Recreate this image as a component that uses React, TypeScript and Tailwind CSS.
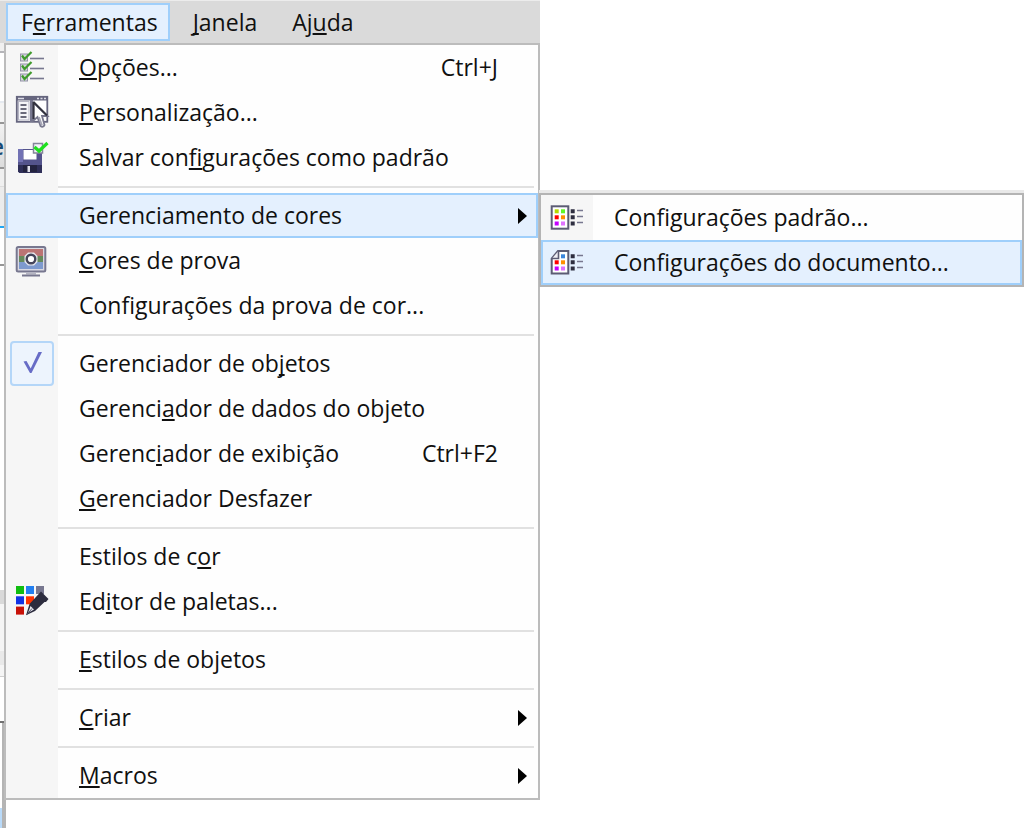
import React from "react";
import clsx from "clsx";

type ItemProps = {
  before?: string
  accessKey?: string
  after?: string
  shortcut?: string
  icon?: React.ReactNode
  submenu?: boolean
  active?: boolean
}

const Label = (props: ItemProps) => (
  <span className="whitespace-nowrap">
    {props.before}
    {props.accessKey && <u className="decoration-2 underline-offset-2 [text-decoration-skip-ink:none]">{props.accessKey}</u>}
    {props.after}
  </span>
)

const MenuItem = (props: ItemProps) => (
  <li>
    <button
      type="button"
      aria-haspopup={props.submenu ? "menu" : undefined}
      className={clsx("flex w-full h-[45px] items-center text-left", props.active && "bg-[#e4f0fe] inset-ring-2 inset-ring-[#9fcffb]")}
    >
      <span className={clsx("w-[52px] h-[45px] shrink-0", !props.active && "bg-[#f6f6f6]")}>{props.icon}</span>
      <span className="flex-1 pl-[21px] pb-0.5"><Label {...props} /></span>
      {props.shortcut && <span className="pr-10 pb-0.5">{props.shortcut}</span>}
      {props.submenu && (
        <svg className="w-[9px] h-4 mr-[11px]" viewBox="0 0 9 16" aria-hidden="true">
          <path d="M0 0 L9 8 L0 16 Z" fill="#000" />
        </svg>
      )}
    </button>
  </li>
)

const Separator = () => (
  <li role="separator" className="flex h-[13px] items-center">
    <span className="w-[52px] h-full shrink-0 bg-[#f6f6f6]" />
    <span className="flex-1 h-0.5 mr-1 bg-[#e1e1e1]" />
  </li>
)

const Icon = (props: { children: React.ReactNode }) => (
  <svg className="block w-[52px] h-[45px]" viewBox="0 0 52 45" fill="none" aria-hidden="true">{props.children}</svg>
)

const OptionsIcon = () => (
  <Icon>
    {[0, 10, 20].map((y) => (
      <g key={y} transform={`translate(0 ${y})`}>
        <rect x="14.5" y="9" width="7" height="7" fill="#d5d5de" stroke="#9494a8" />
        <path d="M24 13.5 H38" stroke="#77778f" strokeWidth="1.6" />
        <path d="M16 10.5 L18.5 14 L25.5 7" stroke="#3f9a2c" strokeWidth="2.2" />
      </g>
    ))}
  </Icon>
)

const CustomizeIcon = () => (
  <Icon>
    <rect x="10.8" y="6.8" width="30.5" height="25" fill="#fff" stroke="#66667f" strokeWidth="1.8" />
    <path d="M10 8.5 H42" stroke="#66667f" strokeWidth="4" />
    <path d="M12 8.5 H18 M31 8.5 H33 M34.5 8.5 H36.5 M38 8.5 H40" stroke="#dcdce6" strokeWidth="1.4" />
    <rect x="12.5" y="11.5" width="10.5" height="18.5" fill="#f4f4f8" stroke="#b5b5c4" />
    <path d="M14.5 15 H20.5 M14.5 19 H20.5 M14.5 23 H20.5 M14.5 27 H20.5" stroke="#3b3b52" strokeWidth="1.6" />
    <path d="M25.5 10 V32" stroke="#77778f" strokeWidth="3" />
    <path d="M27.5 12.5 V30.5 L31.5 27 L34.5 36 Q37 38 38.5 35 L36 26 H41.5 Z" fill="#fff" stroke="#77778d" strokeWidth="1.8" />
    <path d="M27.5 12 V29 M27.5 12 L41 25.5" stroke="#33333f" strokeWidth="2" />
    <path d="M33 27 L36 35.5" stroke="#a5a5b5" strokeWidth="1.8" />
  </Icon>
)

const SaveIcon = () => (
  <Icon>
    <path d="M12 14 H36 V38 H13.5 L12 36.5 Z" fill="#54548c" />
    <path d="M12 14 H17 V27 H12 Z" fill="#7272b4" />
    <path d="M12 30 H36 V38 H13.5 L12 36.5 Z" fill="#2f2f58" />
    <rect x="17.5" y="15" width="13" height="9.5" fill="#fff" />
    <rect x="17" y="30" width="14" height="7" fill="#23233f" />
    <rect x="21.5" y="31" width="2.5" height="6" fill="#e2e2ec" />
    <rect x="27.5" y="8.5" width="9" height="9.5" fill="#f2f2f8" stroke="#85859a" strokeWidth="1.5" />
    <path d="M28.5 12 L33 16 L41.5 8" stroke="#1fe01f" strokeWidth="3.2" />
  </Icon>
)

const ProofIcon = () => (
  <Icon>
    <rect x="10.7" y="9" width="28.6" height="24.5" rx="1.5" fill="#d9d9e2" stroke="#77778f" strokeWidth="2" />
    <rect x="13" y="11" width="24" height="7" fill="#bb7474" />
    <rect x="13" y="18" width="24" height="6" fill="#668a5c" />
    <rect x="13" y="24" width="24" height="7" fill="#7e9ace" />
    <path d="M22 14.5 H28 L31.5 18 V24 L28 27.5 H22 L18.5 24 V18 Z" fill="#e8e8ee" />
    <circle cx="25" cy="21" r="4.3" fill="#fff" stroke="#45455a" strokeWidth="2.4" />
    <path d="M20 35.5 H30" stroke="#b5b5c2" strokeWidth="2" />
    <path d="M16 37.5 H34" stroke="#77778f" strokeWidth="2" />
  </Icon>
)

const CheckedIcon = () => (
  <Icon>
    <rect x="5" y="1" width="42" height="43" rx="3" fill="#edf4fd" stroke="#b4d6f8" strokeWidth="2" />
    <path d="M17.5 20.5 L20.5 20 L24.7 27.5 L32.5 11 H36 L25.5 32 H24 Z" fill="#676cc6" />
  </Icon>
)

const PaletteIcon = () => (
  <Icon>
    <rect x="10" y="7" width="8" height="8" fill="#10bd10" />
    <rect x="20" y="7" width="8" height="8" fill="#227ff0" />
    <rect x="30" y="7" width="8" height="8" fill="#77778f" />
    <rect x="10" y="17.3" width="8" height="8" fill="#1133e6" />
    <rect x="20" y="17.3" width="8" height="8" fill="#ff3300" />
    <rect x="10" y="27.6" width="8" height="8" fill="#c81108" />
    <path d="M23.5 25 L35 12.5 L42.5 20 L40 23 L38.5 23 L29 32 L20 36.2 Z" fill="#2c2c3e" />
    <path d="M24.5 27 L28 30.5 L22 34 Z" fill="#e6e6ee" />
    <path d="M20.5 36 L26 29.5" stroke="#55556a" />
  </Icon>
)

const DocumentColorsIcon = (props: { folded?: boolean }) => (
  <Icon>
    {props.folded ? (
      <path d="M17 11 H27.3 V33.5 H10.7 V18.5 Z" fill="#fff" stroke="#5c5c74" strokeWidth="2" />
    ) : (
      <rect x="10.7" y="11.3" width="16.6" height="22.4" fill="#fff" stroke="#5c5c74" strokeWidth="2" />
    )}
    {!props.folded && <rect x="13.7" y="14.3" width="4" height="4" fill="#b6d800" />}
    <rect x="20" y="14.3" width="4" height="4" fill={props.folded ? "#3b86dc" : "#60f825"} />
    <rect x="13.7" y="20.3" width="4" height="4" fill="#ff0000" />
    <rect x="20" y="20.3" width="4" height="4" fill="#ff9000" />
    <rect x="13.7" y="26.5" width="4" height="4" fill="#c400ff" />
    <rect x="20" y="26.5" width="4" height="4" fill="#df72ff" />
    {props.folded && <path d="M11 18.5 H17.5 V11" fill="#eeeef4" stroke="#5c5c74" strokeWidth="1.6" />}
    <path d="M29.7 16.3 H33.7 M29.7 22.3 H33.7 M29.7 28.5 H33.7" stroke="#2e2e40" strokeWidth="4" />
    <path d="M36 15.5 H42 M36 21.5 H42 M36 27.5 H42" stroke="#77778f" strokeWidth="1.6" />
  </Icon>
)

// sliver of the window that shows left of the menu
const WindowEdge = () => (
  <div className="flex flex-col w-1 shrink-0 overflow-hidden bg-white" aria-hidden="true">
    <div className="h-[10px] shrink-0 bg-[#f0f0f0] border-b-2 border-[#b5b5b9]" />
    <div className="h-[50px] shrink-0 border-b-2 border-[#e6eaf0]" />
    <div className="h-[21px] shrink-0 bg-[#f4f4f4] border-b-2 border-[#969696]" />
    <div className="flex h-[45px] shrink-0 justify-end items-center bg-linear-to-b from-[#f2f2f2] to-[#dcdcdc] border-b-2 border-[#969696] font-semibold text-[#174a74]">e</div>
    <div className="h-[18px] shrink-0 bg-[#f0f0f0] border-b border-[#dddddd]" />
    <div className="h-[41px] shrink-0 bg-[#ececec] border-b-2 border-[#22a7f2]" />
    <div className="h-[38px] shrink-0 border-b-2 border-[#969696]" />
    <div className="h-[324px] shrink-0" />
    <div className="h-[14px] shrink-0 bg-[#d9d9d9]" />
    <div className="h-[47px] shrink-0 bg-[#f5f5f5]" />
    <div className="h-[14px] shrink-0 bg-[#e9e9e9]" />
    <div className="h-[12px] shrink-0 bg-[#f5f5f5] border-b border-[#d0d0d0]" />
    <div className="h-[46px] shrink-0 border-b-2 border-[#707070]" />
    <div className="h-[85px] shrink-0 ml-0.5 bg-[#b4b4b4]" />
    <div className="flex-1 border-r-2 border-[#b4b4b4] bg-[#b9daf9]" />
  </div>
)

const tabClass = "h-[38px] pl-[13px] pr-2.5 border-2 flex items-center"

export default function App() {
  return (
    <div className="grid grid-cols-[540fr_484fr] min-h-screen items-stretch bg-white font-['Open_Sans','Noto_Sans',sans-serif] text-[23px] leading-[30px] text-[#101010]">
      <div className="flex flex-col">
        <nav className="flex h-[43px] shrink-0 gap-2 pl-1.5 pt-0.5 bg-[#dadada] border-t border-[#ececec]">
          <button type="button" aria-expanded="true" className={clsx(tabClass, "border-[#9fcffb] bg-[#e4f0fe]")}>
            <Label before="F" accessKey="e" after="rramentas" />
          </button>
          <button type="button" className={clsx(tabClass, "border-transparent")}>
            <Label accessKey="J" after="anela" />
          </button>
          <button type="button" className={clsx(tabClass, "border-transparent")}>
            <Label before="Aj" accessKey="u" after="da" />
          </button>
        </nav>
        <div className="flex flex-1">
          <WindowEdge />
          <div className="flex flex-1 flex-col">
            <ul className="border-2 border-[#bcbcbc] bg-[#fefefe]">
              <MenuItem accessKey="O" after="pções..." shortcut="Ctrl+J" icon={<OptionsIcon />} />
              <MenuItem accessKey="P" after="ersonalização..." icon={<CustomizeIcon />} />
              <MenuItem before="Salvar con" accessKey="f" after="igurações como padrão" icon={<SaveIcon />} />
              <Separator />
              <MenuItem before="Gerenciamento de cores" submenu active />
              <MenuItem accessKey="C" after="ores de prova" icon={<ProofIcon />} />
              <MenuItem before="Configurações da prova de cor..." />
              <Separator />
              <MenuItem before="Gerenciador de ob" accessKey="j" after="etos" icon={<CheckedIcon />} />
              <MenuItem before="Gerenci" accessKey="a" after="dor de dados do objeto" />
              <MenuItem before="Gerenc" accessKey="i" after="ador de exibição" shortcut="Ctrl+F2" />
              <MenuItem accessKey="G" after="erenciador Desfazer" />
              <Separator />
              <MenuItem before="Estilos de c" accessKey="o" after="r" />
              <MenuItem before="Ed" accessKey="i" after="tor de paletas..." icon={<PaletteIcon />} />
              <Separator />
              <MenuItem accessKey="E" after="stilos de objetos" />
              <Separator />
              <MenuItem accessKey="C" after="riar" submenu />
              <Separator />
              <MenuItem accessKey="M" after="acros" submenu />
            </ul>
            <div className="flex-1 border-l-2 border-[#b4b4b4]" />
          </div>
        </div>
      </div>
      <div className="pt-[190px] -ml-px">
        <ul className="border-2 border-[#b4b4b4] bg-[#fefefe] mt-[3px] shadow-[0_-3px_0_#e9e9e9]">
          <MenuItem before="Configurações padrão..." icon={<DocumentColorsIcon />} />
          <MenuItem before="Configurações do documento..." icon={<DocumentColorsIcon folded />} active />
        </ul>
      </div>
    </div>
  )
}
